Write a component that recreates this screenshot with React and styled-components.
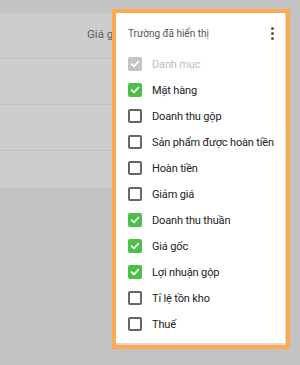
import React from "react";
import styled, { createGlobalStyle } from "styled-components";

const GlobalStyle = createGlobalStyle`
  body {
    margin: 0;
    background: #c3c3c3;
    font-family: Roboto, "Noto Sans", "Liberation Sans", sans-serif;
  }
`;

const FIELDS = [
  { label: "Danh mục", checked: true, disabled: true },
  { label: "Mặt hàng", checked: true },
  { label: "Doanh thu gộp" },
  { label: "Sản phẩm được hoàn tiền" },
  { label: "Hoàn tiền" },
  { label: "Giảm giá" },
  { label: "Doanh thu thuần", checked: true },
  { label: "Giá gốc", checked: true },
  { label: "Lợi nhuận gộp", checked: true },
  { label: "Tỉ lệ tồn kho" },
  { label: "Thuế" },
];

const Screen = styled.div`
  position: relative;
  width: 300px;
  height: 365px;
  overflow: hidden;
  padding-top: 13px;
  box-sizing: border-box;
`;

const Table = styled.section`
  width: 150px;
  background: #cdcdcd;
  height: 175px;
`;

const HeaderRow = styled.div`
  height: 46px;
  border-bottom: 1px solid #bfbfbf;
  box-sizing: border-box;
  display: flex;
  align-items: center;
  padding-left: 87px;
  padding-bottom: 3px;
  font-size: 11.5px;
  color: #5e5e5e;
`;

const Row = styled.div`
  height: 46px;
  border-bottom: 1px solid #bfbfbf;
  box-sizing: border-box;
`;

const Highlight = styled.div`
  position: absolute;
  left: 112px;
  top: 9px;
  border: 4px solid #ffaa50;
  background: #d9d9d9;
`;

const Card = styled.div`
  width: 169px;
  height: 330px;
  margin: 0 1px 2px 0;
  background: #fff;
  box-sizing: border-box;
  padding: 12px 0 0 12px;
`;

const CardHead = styled.div`
  display: flex;
  align-items: center;
  justify-content: space-between;
  height: 16px;
  padding-right: 8px;
  margin-bottom: 10px;
`;

const Title = styled.span`
  font-size: 10px;
  color: #555;
`;

const Kebab = styled.div`
  display: flex;
  flex-direction: column;
  gap: 2px;
  padding: 0 3px;
  > i {
    width: 3px;
    height: 3px;
    border-radius: 50%;
    background: #555;
  }
`;

const List = styled.ul`
  list-style: none;
  margin: 0;
  padding: 0;
`;

const Item = styled.li`
  height: 26px;
  display: flex;
  align-items: center;
  gap: 10px;
  font-size: 11px;
  white-space: nowrap;
  letter-spacing: -0.15px;
  color: ${(p) => (p.disabled ? "#bdbdbd" : "#222")};
`;

const Box = styled.span`
  flex: none;
  width: 14px;
  height: 14px;
  box-sizing: border-box;
  border-radius: 2px;
  display: flex;
  align-items: center;
  justify-content: center;
  background: ${(p) =>
    p.disabled ? "#c4c4c4" : p.checked ? "#4cbf47" : "#fff"};
  border: ${(p) => (p.checked ? "none" : "2px solid #666")};
`;

const Check = () => (
  <svg width="10" height="10" viewBox="0 0 10 10">
    <path
      d="M1.6 5.2 L4 7.4 L8.4 2.6"
      fill="none"
      stroke="#fff"
      strokeWidth="1.8"
      strokeLinecap="round"
      strokeLinejoin="round"
    />
  </svg>
);

const App = () => {
  return (
    <Screen>
      <GlobalStyle />
      <Table>
        <HeaderRow>Giá gốc</HeaderRow>
        <Row />
        <Row />
      </Table>
      <Highlight>
        <Card>
          <CardHead>
            <Title>Trường đã hiển thị</Title>
            <Kebab>
              <i />
              <i />
              <i />
            </Kebab>
          </CardHead>
          <List>
            {FIELDS.map((f) => (
              <Item key={f.label} disabled={f.disabled}>
                <Box checked={f.checked} disabled={f.disabled}>
                  {f.checked && <Check />}
                </Box>
                {f.label}
              </Item>
            ))}
          </List>
        </Card>
      </Highlight>
    </Screen>
  );
};

export default App;
